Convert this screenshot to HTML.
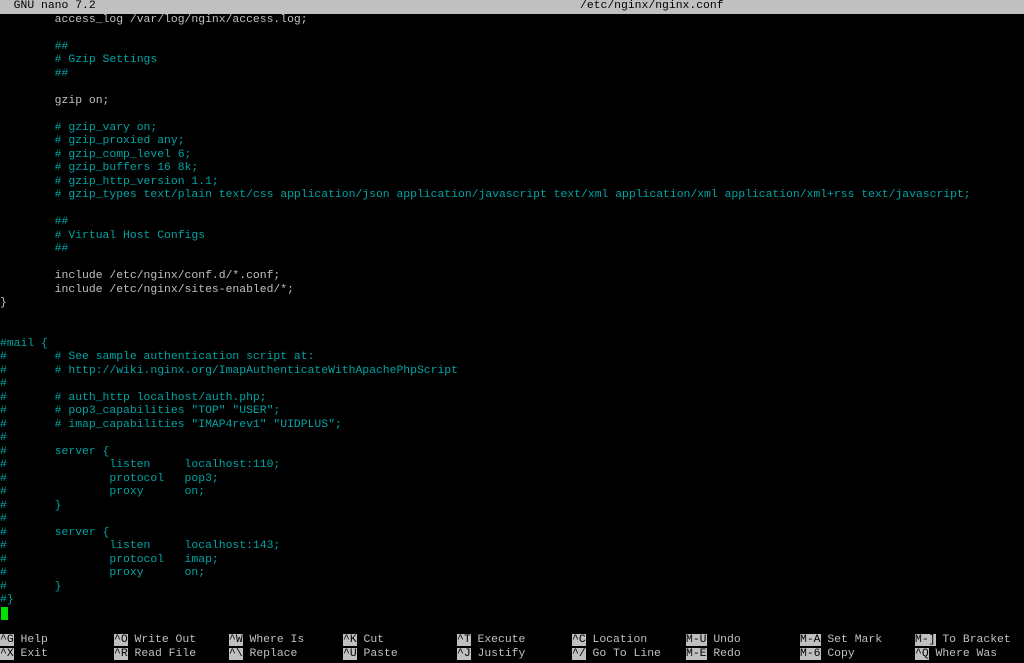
<!DOCTYPE html>
<html><head><meta charset="utf-8"><style>
html,body{margin:0;padding:0;background:#000;width:1024px;height:663px;overflow:hidden}
#t{position:absolute;left:0;top:0;width:1024px;height:14px;background:#c0c0c0}
.r{position:absolute;left:0;height:13.5px;line-height:13.5px;font-family:"Liberation Mono",monospace;font-size:11.4px;white-space:pre;color:#c0c0c0}
.c{color:#00a4a4}
.k{background:#c0c0c0;color:#000}
.cur{position:absolute;left:1px;top:607px;width:7px;height:13px;background:#00e000}
</style></head><body>
<div id="t"></div>
<div class="r" style="top:0;color:#000">  GNU nano 7.2</div>
<div class="r" style="top:0;left:580px;color:#000">/etc/nginx/nginx.conf</div>
<div class="r" style="top:13.5px">        access_log /var/log/nginx/access.log;</div>
<div class="r c" style="top:40.5px">        ##</div>
<div class="r c" style="top:54px">        # Gzip Settings</div>
<div class="r c" style="top:67.5px">        ##</div>
<div class="r" style="top:94.5px">        gzip on;</div>
<div class="r c" style="top:121.5px">        # gzip_vary on;</div>
<div class="r c" style="top:135px">        # gzip_proxied any;</div>
<div class="r c" style="top:148.5px">        # gzip_comp_level 6;</div>
<div class="r c" style="top:162px">        # gzip_buffers 16 8k;</div>
<div class="r c" style="top:175.5px">        # gzip_http_version 1.1;</div>
<div class="r c" style="top:189px">        # gzip_types text/plain text/css application/json application/javascript text/xml application/xml application/xml+rss text/javascript;</div>
<div class="r c" style="top:216px">        ##</div>
<div class="r c" style="top:229.5px">        # Virtual Host Configs</div>
<div class="r c" style="top:243px">        ##</div>
<div class="r" style="top:270px">        include /etc/nginx/conf.d/*.conf;</div>
<div class="r" style="top:283.5px">        include /etc/nginx/sites-enabled/*;</div>
<div class="r" style="top:297px">}</div>
<div class="r c" style="top:337.5px">#mail {</div>
<div class="r c" style="top:351px">#       # See sample authentication script at:</div>
<div class="r c" style="top:364.5px">#       # http://wiki.nginx.org/ImapAuthenticateWithApachePhpScript</div>
<div class="r c" style="top:378px">#</div>
<div class="r c" style="top:391.5px">#       # auth_http localhost/auth.php;</div>
<div class="r c" style="top:405px">#       # pop3_capabilities "TOP" "USER";</div>
<div class="r c" style="top:418.5px">#       # imap_capabilities "IMAP4rev1" "UIDPLUS";</div>
<div class="r c" style="top:432px">#</div>
<div class="r c" style="top:445.5px">#       server {</div>
<div class="r c" style="top:459px">#               listen     localhost:110;</div>
<div class="r c" style="top:472.5px">#               protocol   pop3;</div>
<div class="r c" style="top:486px">#               proxy      on;</div>
<div class="r c" style="top:499.5px">#       }</div>
<div class="r c" style="top:513px">#</div>
<div class="r c" style="top:526.5px">#       server {</div>
<div class="r c" style="top:540px">#               listen     localhost:143;</div>
<div class="r c" style="top:553.5px">#               protocol   imap;</div>
<div class="r c" style="top:567px">#               proxy      on;</div>
<div class="r c" style="top:580.5px">#       }</div>
<div class="r c" style="top:594px">#}</div>
<div class="cur"></div>

<div class="r" style="top:634px;left:0"><span class="k">^G</span> Help</div>
<div class="r" style="top:647.5px;left:0"><span class="k">^X</span> Exit</div>
<div class="r" style="top:634px;left:114px"><span class="k">^O</span> Write Out</div>
<div class="r" style="top:647.5px;left:114px"><span class="k">^R</span> Read File</div>
<div class="r" style="top:634px;left:229px"><span class="k">^W</span> Where Is</div>
<div class="r" style="top:647.5px;left:229px"><span class="k">^\</span> Replace</div>
<div class="r" style="top:634px;left:343px"><span class="k">^K</span> Cut</div>
<div class="r" style="top:647.5px;left:343px"><span class="k">^U</span> Paste</div>
<div class="r" style="top:634px;left:457px"><span class="k">^T</span> Execute</div>
<div class="r" style="top:647.5px;left:457px"><span class="k">^J</span> Justify</div>
<div class="r" style="top:634px;left:572px"><span class="k">^C</span> Location</div>
<div class="r" style="top:647.5px;left:572px"><span class="k">^/</span> Go To Line</div>
<div class="r" style="top:634px;left:686px"><span class="k">M-U</span> Undo</div>
<div class="r" style="top:647.5px;left:686px"><span class="k">M-E</span> Redo</div>
<div class="r" style="top:634px;left:800px"><span class="k">M-A</span> Set Mark</div>
<div class="r" style="top:647.5px;left:800px"><span class="k">M-6</span> Copy</div>
<div class="r" style="top:634px;left:915px"><span class="k">M-]</span> To Bracket</div>
<div class="r" style="top:647.5px;left:915px"><span class="k">^Q</span> Where Was</div>
</body></html>
